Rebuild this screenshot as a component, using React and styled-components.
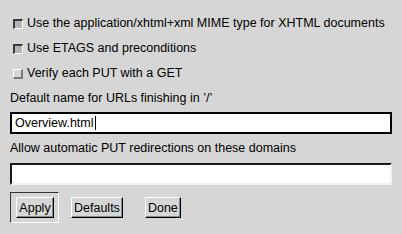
import React from 'react';
import styled, { createGlobalStyle } from 'styled-components';

const Global = createGlobalStyle`
  html, body {
    margin: 0;
    padding: 0;
    background: #d6d6d6;
  }
  body {
    font-family: 'Liberation Sans', Arial, sans-serif;
    font-size: 12.5px;
    color: #000;
  }
`;

const Panel = styled.div`
  width: 402px;
  height: 234px;
  box-sizing: border-box;
  padding: 10px 10px 0 10px;
  display: flex;
  flex-direction: column;
`;

const CheckRow = styled.label`
  display: flex;
  align-items: center;
  height: 25px;
  padding-left: 3px;
  gap: 4px;
`;

const Box = styled.span`
  box-sizing: border-box;
  width: 10px;
  height: 10px;
  border-style: solid;
  border-width: ${(p) => (p.$on ? '2px 1px 1px 2px' : '1px 2px 2px 1px')};
  border-color: ${(p) => (p.$on ? '#3a3a3a #ffffff #ffffff #3a3a3a' : '#ffffff #7a7a7a #7a7a7a #ffffff')};
  background: ${(p) => (p.$on ? '#b5b5b5' : '#d6d6d6')};
  margin-top: 2px;
`;

const FieldLabel = styled.div`
  height: 16px;
  line-height: 16px;
  margin-top: ${(p) => p.$top}px;
`;

const Field = styled.div`
  height: 22px;
  box-sizing: border-box;
  width: 382px;
  margin-top: ${(p) => p.$top}px;
  background: #fff;
  border-style: solid;
  border-width: 2px;
  border-color: ${(p) => (p.$focus ? '#000' : '#1a1a1a #f2f2f2 #f2f2f2 #1a1a1a')};
  padding: 2px 3px;
  line-height: 15px;
  display: flex;
  align-items: center;
`;

const Caret = styled.span`
  display: inline-block;
  width: 1px;
  height: 14px;
  background: #000;
  margin-left: 1px;
`;

const ButtonRow = styled.div`
  display: flex;
  align-items: center;
  margin-top: 7px;
`;

const DefaultRing = styled.div`
  border: 1px solid;
  border-color: #333 #fff #fff #333;
  padding: 4px 4px 4px 5px;
  margin-right: 12px;
`;

const Button = styled.button`
  font-family: 'Liberation Sans', Arial, sans-serif;
  font-size: 12.5px;
  color: #000;
  background: #d6d6d6;
  height: 21px;
  min-width: ${(p) => p.$w}px;
  padding: 0 2px;
  border: 1px solid;
  border-color: #fff #000 #000 #fff;
  box-shadow: inset -1px -1px 0 #888;
  margin-right: ${(p) => p.$mr || 0}px;
`;

export default function App() {
  return (
    <>
      <Global />
      <Panel>
        <CheckRow>
          <Box $on />
          Use the application/xhtml+xml MIME type for XHTML documents
        </CheckRow>
        <CheckRow>
          <Box $on />
          Use ETAGS and preconditions
        </CheckRow>
        <CheckRow>
          <Box />
          Verify each PUT with a GET
        </CheckRow>
        <FieldLabel $top={5}>Default name for URLs finishing in ’/’</FieldLabel>
        <Field $top={6} $focus>
          Overview.html
          <Caret />
        </Field>
        <FieldLabel $top={6}>Allow automatic PUT redirections on these domains</FieldLabel>
        <Field $top={7} />
        <ButtonRow>
          <DefaultRing>
            <Button $w={38}>Apply</Button>
          </DefaultRing>
          <Button $w={50} $mr={22}>Defaults</Button>
          <Button $w={36}>Done</Button>
        </ButtonRow>
      </Panel>
    </>
  );
}
